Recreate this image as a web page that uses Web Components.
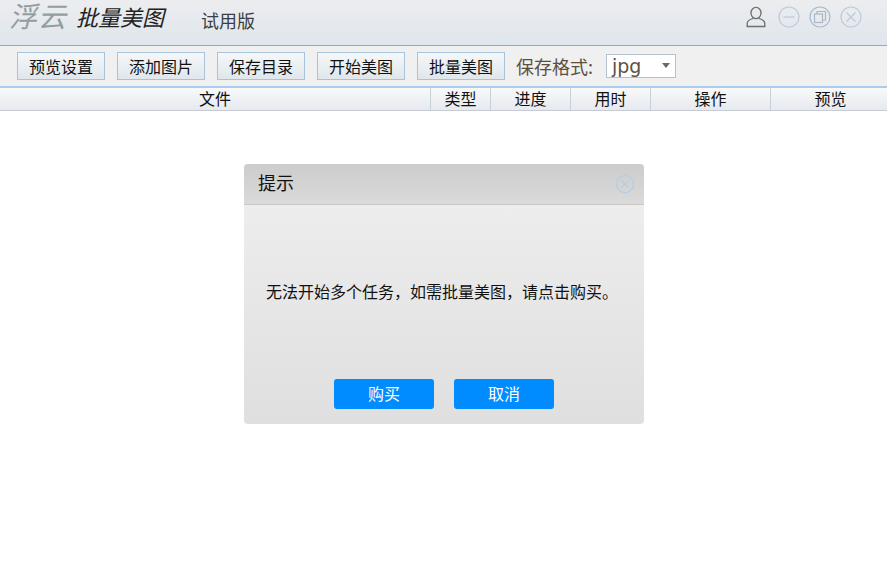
<!DOCTYPE html>
<html lang="zh">
<head>
<meta charset="utf-8">
<title>批量美图</title>
<style>
  html, body {
    margin: 0;
    height: 100%;
    background: #fff;
    overflow: hidden;
  }
  body {
    font-family: "Noto Sans CJK SC", "Liberation Sans", sans-serif;
    color: #000;
  }
</style>
</head>
<body>
<app-window>
  <title-bar></title-bar>
  <tool-bar>
    <tool-button>预览设置</tool-button>
    <tool-button>添加图片</tool-button>
    <tool-button>保存目录</tool-button>
    <tool-button>开始美图</tool-button>
    <tool-button>批量美图</tool-button>
    <format-select></format-select>
  </tool-bar>
  <list-header columns="文件:430,类型:60,进度:80,用时:80,操作:120,预览:120"></list-header>
  <alert-dialog heading="提示">
    无法开始多个任务，如需批量美图，请点击购买。
    <dialog-button slot="actions">购买</dialog-button>
    <dialog-button slot="actions">取消</dialog-button>
  </alert-dialog>
</app-window>

<script>
class AppWindow extends HTMLElement {
  constructor() {
    super();
    this.attachShadow({ mode: "open" });
    this.shadowRoot.innerHTML = `
      <style>
        :host {
          display: flex;
          flex-direction: column;
          position: relative;
          width: 887px;
          height: 585px;
          overflow: hidden;
        }
      </style>
      <slot></slot>
    `;
  }
}

class TitleBar extends HTMLElement {
  constructor() {
    super();
    this.attachShadow({ mode: "open" });
    this.shadowRoot.innerHTML = `
      <style>
        :host {
          display: flex;
          align-items: center;
          height: 46px;
          box-sizing: border-box;
          padding: 0 25px 10px 9px;
          background: linear-gradient(#ecedef, #dfe6ed);
          border-bottom: 1px solid #a4a8ac;
        }
        .brand {
          font-family: "Liberation Sans", "Noto Sans CJK SC", sans-serif;
          font-size: 28px;
          font-style: italic;
          letter-spacing: 1px;
          color: #939d9f;
          line-height: 32px;
          margin-right: 9px;
        }
        .name {
          font-size: 22px;
          font-style: italic;
          color: #222;
          line-height: 30px;
          margin-right: 37px;
          margin-bottom: 3px;
        }
        .edition {
          font-size: 18px;
          color: #3a3f44;
          margin-top: 4px;
        }
        .controls {
          margin-left: auto;
          align-self: flex-start;
          margin-top: 6px;
          display: flex;
          align-items: center;
          gap: 9px;
        }
        svg { display: block; }
        .user { margin-right: 3px; }
      </style>
      <span class="brand">浮云</span>
      <span class="name">批量美图</span>
      <span class="edition">试用版</span>
      <div class="controls">
        <svg class="user" width="20" height="22" viewBox="0 0 20 22" fill="none" stroke="#6f6f6f" stroke-width="1.3">
          <ellipse cx="10" cy="7" rx="5" ry="5.6"/>
          <path d="M7 12.5C3.5 13.5 1.2 15 1.2 17.5V20.5H18.8V17.5C18.8 15 16.5 13.5 13 12.5"/>
        </svg>
        <svg width="22" height="22" viewBox="0 0 22 22" fill="none" stroke="#bccad9" stroke-width="1.2">
          <circle cx="11" cy="11" r="10"/>
          <path d="M5.5 11H16.5"/>
        </svg>
        <svg width="22" height="22" viewBox="0 0 22 22" fill="none" stroke="#a9b8c8" stroke-width="1.2">
          <circle cx="11" cy="11" r="10"/>
          <rect x="5.5" y="8" width="8" height="8.5"/>
          <path d="M8 8V5.5H16.5V14H13.5"/>
        </svg>
        <svg width="22" height="22" viewBox="0 0 22 22" fill="none" stroke="#bccad9" stroke-width="1.2">
          <circle cx="11" cy="11" r="10"/>
          <path d="M6.5 6.5L15.5 15.5M15.5 6.5L6.5 15.5"/>
        </svg>
      </div>
    `;
  }
}

class ToolBar extends HTMLElement {
  constructor() {
    super();
    this.attachShadow({ mode: "open" });
    this.shadowRoot.innerHTML = `
      <style>
        :host {
          display: flex;
          align-items: center;
          gap: 12px;
          height: 40px;
          box-sizing: border-box;
          padding: 0 0 0 17px;
          background: #f0f0f0;
        }
      </style>
      <slot></slot>
    `;
  }
}

class ToolButton extends HTMLElement {
  constructor() {
    super();
    this.attachShadow({ mode: "open" });
    this.shadowRoot.innerHTML = `
      <style>
        :host {
          display: flex;
          align-items: center;
          justify-content: center;
          width: 88px;
          height: 28px;
          box-sizing: border-box;
          border: 1px solid #a6c3dd;
          background: linear-gradient(#f6f7f8, #dfe7ec);
          font-size: 16px;
          color: #111;
        }
      </style>
      <slot></slot>
    `;
  }
}

class FormatSelect extends HTMLElement {
  constructor() {
    super();
    this.attachShadow({ mode: "open" });
    this.shadowRoot.innerHTML = `
      <style>
        :host {
          display: flex;
          align-items: center;
        }
        .label {
          font-size: 18px;
          color: #5c4f3f;
          width: 90px;
          margin-left: -1px;
          white-space: nowrap;
        }
        .box {
          position: relative;
          width: 70px;
          height: 24px;
          box-sizing: border-box;
          border: 1px solid #b4c1d0;
          background: #fff;
          padding-left: 5px;
          font-family: "DejaVu Sans", sans-serif;
          font-size: 19px;
          line-height: 22px;
          color: #5c5248;
        }
        .arrow {
          position: absolute;
          right: 5px;
          top: 8px;
          width: 0;
          height: 0;
          border-left: 4px solid transparent;
          border-right: 4px solid transparent;
          border-top: 5px solid #6a6a6a;
        }
      </style>
      <span class="label">保存格式:</span>
      <div class="box">jpg<span class="arrow"></span></div>
    `;
  }
}

class ListHeader extends HTMLElement {
  constructor() {
    super();
    this.attachShadow({ mode: "open" });
  }

  connectedCallback() {
    const cols = (this.getAttribute("columns") || "")
      .split(",")
      .map(c => c.split(":"));

    this.shadowRoot.innerHTML = `
      <style>
        :host {
          display: flex;
          height: 25px;
          box-sizing: border-box;
          border-top: 2px solid #a9cdf0;
          border-bottom: 1px solid #c6ccd2;
          background: linear-gradient(#f9f9fa, #e6e9ee);
          overflow: hidden;
        }
        .col {
          flex: none;
          box-sizing: border-box;
          text-align: center;
          font-size: 16px;
          line-height: 21px;
          color: #111;
          border-left: 1px solid #c8d0d8;
        }
        .col:first-of-type { border-left: 0; }
      </style>
      ${cols.map(c => `<div class="col" style="width:${c[1]}px">${c[0]}</div>`).join("")}
    `;
  }
}

class AlertDialog extends HTMLElement {
  constructor() {
    super();
    this.attachShadow({ mode: "open" });
  }

  connectedCallback() {
    this.shadowRoot.innerHTML = `
      <style>
        :host {
          position: absolute;
          left: 244px;
          top: 164px;
          width: 400px;
          height: 260px;
          display: flex;
          flex-direction: column;
          border-radius: 4px;
          overflow: hidden;
          background: linear-gradient(#ededed, #dfdfdf) 0 41px / 100% 219px no-repeat;
        }
        header {
          display: flex;
          align-items: center;
          justify-content: space-between;
          height: 41px;
          box-sizing: border-box;
          padding: 0 9px 0 14px;
          background: linear-gradient(#cccccc, #dadada);
          border-bottom: 1px solid #c8c8c8;
          font-size: 18px;
          color: #111;
        }
        header span { margin-top: -4px; }
        .message {
          flex: 1;
          display: flex;
          align-items: center;
          padding: 0 0 2px 22px;
          font-size: 16px;
          color: #111;
        }
        .actions {
          display: flex;
          justify-content: center;
          gap: 20px;
          padding-bottom: 15px;
        }
        svg { display: block; }
      </style>
      <header>
        <span>${this.getAttribute("heading") || ""}</span>
        <svg width="20" height="20" viewBox="0 0 20 20" fill="none" stroke="#b8cde0" stroke-width="1.3">
          <circle cx="10" cy="10" r="8.6"/>
          <path d="M6.5 6.5L13.5 13.5M13.5 6.5L6.5 13.5"/>
        </svg>
      </header>
      <div class="message"><slot></slot></div>
      <div class="actions"><slot name="actions"></slot></div>
    `;
  }
}

class DialogButton extends HTMLElement {
  constructor() {
    super();
    this.attachShadow({ mode: "open" });
    this.shadowRoot.innerHTML = `
      <style>
        :host {
          display: flex;
          align-items: center;
          justify-content: center;
          width: 100px;
          height: 30px;
          box-sizing: border-box;
          padding-bottom: 2px;
          border-radius: 3px;
          background: #008cff;
          color: #fff;
          font-size: 16px;
        }
      </style>
      <slot></slot>
    `;
  }
}

customElements.define("app-window", AppWindow);
customElements.define("title-bar", TitleBar);
customElements.define("tool-bar", ToolBar);
customElements.define("tool-button", ToolButton);
customElements.define("format-select", FormatSelect);
customElements.define("list-header", ListHeader);
customElements.define("alert-dialog", AlertDialog);
customElements.define("dialog-button", DialogButton);
</script>
</body>
</html>
